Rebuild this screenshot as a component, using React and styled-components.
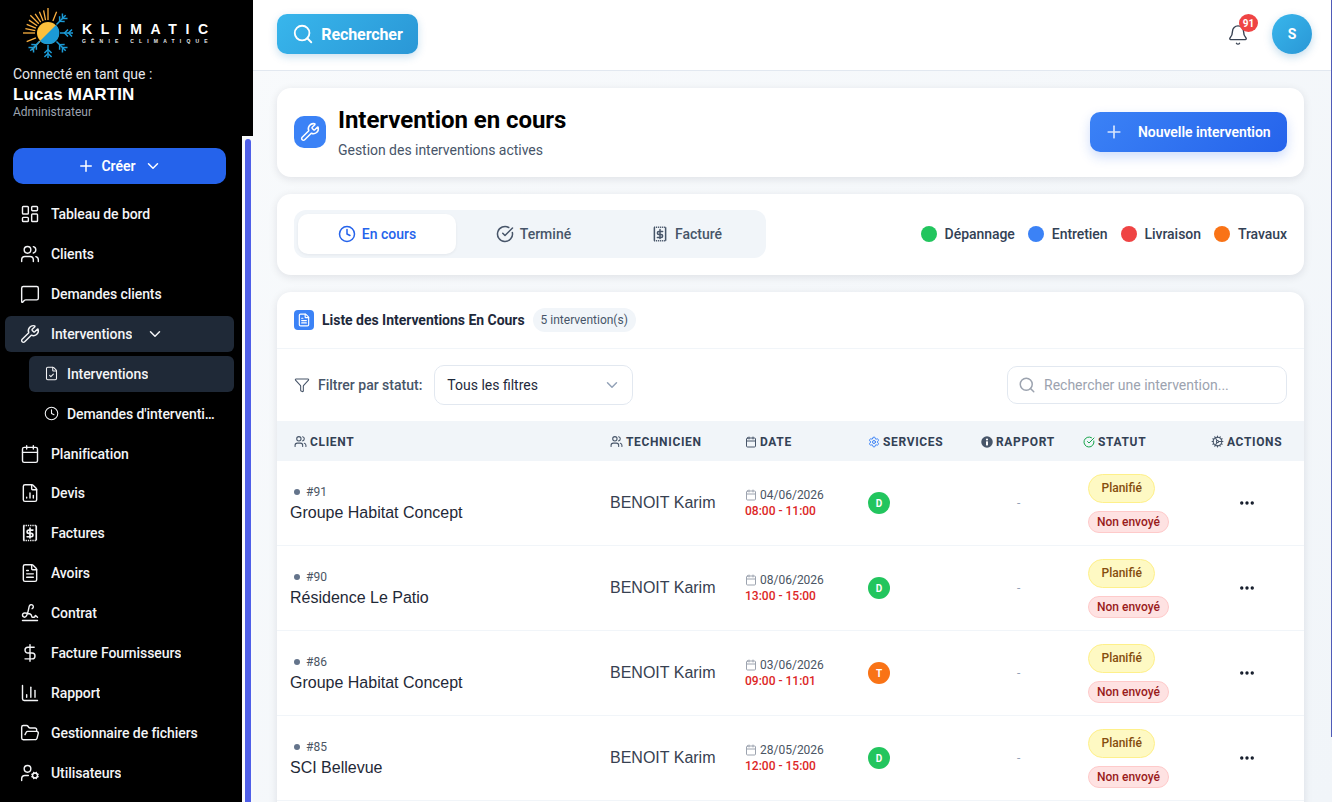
import React from "react";
import styled, { createGlobalStyle } from "styled-components";
import {
  Bell, Calendar, ChartColumn, ChevronDown, CircleCheckBig, Clock, Cog, DollarSign, Ellipsis, FileChartColumn,
  FileCheck, FileText, Filter, FolderOpen, LayoutDashboard, MessageSquare, Plus, Search, Settings, Signature,
  UserCog, Users, Wrench,
} from "lucide-react";

const GlobalStyle = createGlobalStyle`
  * { box-sizing: border-box; }
  html, body { margin: 0; height: 100%; overflow: hidden; }
  body { font-family: Roboto, "Liberation Sans", sans-serif; background: #f8fafc; }
  #root { height: 100%; }
`;

//! Icons the packages don't have
const ReceiptBox = ({ size = 18 }) => (
  <svg width={size} height={size} viewBox="0 0 24 24" fill="none" stroke="currentColor" strokeWidth="2">
    <path d="M4 3H20M4 21H20" strokeDasharray="1.6 1.1" />
    <path d="M4.5 3V21M19.5 3V21" />
    <path d="M12 6v12M15.5 8.5H10.5a2 2 0 0 0 0 4h3a2 2 0 0 1 0 4H8.5" strokeLinecap="round" />
  </svg>
);

const InfoFilled = ({ size = 12 }) => (
  <svg width={size} height={size} viewBox="0 0 24 24">
    <circle cx="12" cy="12" r="11.5" fill="#475569" />
    <rect x="10" y="10.5" width="4" height="8.5" rx="0.8" fill="#fff" />
    <circle cx="12" cy="7" r="2.2" fill="#fff" />
  </svg>
);

const LogoMark = () => {
  const rays = [-135, -158, -112, -180, -90, -202, -68, -146, -124, -169, -101];
  const arms = [0, 45, 90, -45, 135];
  return (
    <svg width="52" height="52" viewBox="0 0 52 52">
      <circle cx="25" cy="25" r="11" fill="#fbbf3c" />
      <path d="M33 17A11 11 0 0 1 17 33Z" fill="#1b9ad6" />
      {rays.map((a) => (
        <line key={a} x1="13" y1="0" x2={a % 45 === 0 ? 25 : 23} y2="0" stroke="#fbb040" strokeWidth="1.3"
          transform={`translate(25 25) rotate(${a})`} />
      ))}
      <line x1="17" y1="33" x2="9" y2="42" stroke="#e9b04a" strokeWidth="1.3" />
      {arms.map((a) => (
        <g key={a} transform={`translate(25 25) rotate(${a})`} stroke="#1b9ad6" strokeWidth="1.5" fill="none">
          <line x1="12" y1="0" x2="25" y2="0" />
          <path d="M20 -3.6L16.5 0L20 3.6M24 -3.6L20.5 0L24 3.6" />
        </g>
      ))}
    </svg>
  );
};

const Shell = styled.div`
  display: flex;
  height: 100vh;
  overflow: hidden;
`;

const Sidebar = styled.aside`
  width: 253px;
  flex: none;
  display: flex;
  flex-direction: column;
  background: #000;
  color: #fff;
`;

const Brand = styled.div`
  height: 60px;
  padding: 8px 0 0 23px;
  display: flex;
  gap: 7px;
`;

const BrandText = styled.div`
  padding-top: 14px;
  width: 130px;
`;

const BrandName = styled.div`
  font-family: "Liberation Sans", sans-serif;
  font-weight: 700;
  font-size: 14px;
  line-height: 14px;
  letter-spacing: 8.6px;
  white-space: nowrap;
`;

const BrandTag = styled.div`
  font-family: "Liberation Sans", sans-serif;
  font-weight: 700;
  font-size: 5px;
  line-height: 8px;
  margin-top: 1px;
  letter-spacing: 5.2px;
  color: #e5e7eb;
  white-space: nowrap;
`;

const UserBlock = styled.div`
  height: 76px;
  padding: 5px 13px 0;
`;

const Connected = styled.div`
  font-size: 14px;
  line-height: 18px;
  color: #e5e7eb;
`;

const UserName = styled.div`
  font-family: "Liberation Sans", sans-serif;
  font-weight: 700;
  font-size: 17px;
  line-height: 22px;
  margin-top: 1px;
  letter-spacing: 0.13px;
`;

const UserRole = styled.div`
  font-size: 12px;
  line-height: 14px;
  margin-top: -1px;
  color: #9ca3af;
`;

const NavArea = styled.div`
  flex: 1;
  min-height: 0;
  display: flex;
`;

const Nav = styled.nav`
  width: 242px;
  padding: 12px 8px 0 5px;
  display: flex;
  flex-direction: column;
  gap: 4px;
  overflow: hidden;
`;

const CreateButton = styled.button`
  height: 36px;
  margin: 0 0 7.94px 8px;
  width: 213px;
  border: 0;
  border-radius: 10px;
  background: #2563eb;
  color: #fff;
  font: 600 14px Roboto, sans-serif;
  display: flex;
  flex: none;
  align-items: center;
  justify-content: center;
  gap: 6px;
`;

const NavRow = styled.div`
  height: 35.94px;
  flex: none;
  display: flex;
  align-items: center;
  gap: ${(p) => (p.$sub ? "8px" : "11px")};
  margin-left: ${(p) => (p.$sub ? "24px" : "0")};
  padding-left: 15px;
  padding-right: 14px;
  border-radius: 6px;
  background: ${(p) => (p.$active ? "#1f2937" : "transparent")};
  color: #f3f4f6;
  font-size: 14px;
  font-weight: 500;
  letter-spacing: -0.08px;
  svg { flex: none; }
`;

const NavLabel = styled.span`
  white-space: nowrap;
  overflow: hidden;
  text-overflow: ellipsis;
`;

const NavChevron = styled(ChevronDown)`
  margin-left: 3px;
`;

const ScrollTrack = styled.div`
  width: 11px;
  padding-left: 3px;
  background: #f8fafc;
`;

const ScrollThumb = styled.div`
  width: 6px;
  height: 100%;
  margin-top: 3px;
  border-radius: 3px 3px 0 0;
  background: #4f5fe8;
`;

const MainWrap = styled.div`
  flex: 1;
  min-width: 0;
  display: flex;
  background: linear-gradient(135deg, #f8fafc 0%, #f1f5f9 100%);
`;

const Main = styled.main`
  flex: 1;
  min-width: 0;
  overflow: hidden;
`;

const PageThumb = styled.div`
  width: 1px;
  height: 737px;
  background: #4f5bb8;
`;

const Topbar = styled.header`
  height: 71px;
  padding: 14px 19px 0 24px;
  display: flex;
  justify-content: space-between;
  background: #fff;
  border-bottom: 1px solid #e2e8f0;
`;

const SearchButton = styled.button`
  width: 141px;
  height: 40px;
  border: 0;
  border-radius: 10px;
  background: linear-gradient(135deg, #38b6ec, #2a97d6);
  box-shadow: 0 3px 8px rgba(14, 116, 180, 0.22);
  color: #fff;
  font: 700 16px Roboto, sans-serif;
  letter-spacing: -0.1px;
  display: flex;
  align-items: center;
  justify-content: center;
  gap: 7px;
`;

const TopRight = styled.div`
  display: flex;
  gap: 23px;
  align-items: flex-start;
`;

const BellWrap = styled.div`
  position: relative;
  width: 22px;
  height: 40px;
  padding-top: 1px;
  display: flex;
  align-items: center;
  color: #374151;
`;

const BellBadge = styled.span`
  position: absolute;
  top: 0;
  left: 12px;
  width: 19px;
  height: 18px;
  border-radius: 50%;
  background: #ef4444;
  color: #fff;
  font-size: 10px;
  font-weight: 700;
  display: flex;
  align-items: center;
  justify-content: center;
`;

const Avatar = styled.div`
  width: 40px;
  height: 40px;
  border-radius: 50%;
  background: linear-gradient(135deg, #38b6ec, #2a97d6);
  box-shadow: 0 3px 8px rgba(14, 116, 180, 0.25);
  color: #fff;
  font-weight: 700;
  font-size: 14px;
  display: flex;
  align-items: center;
  justify-content: center;
`;

const Content = styled.div`
  padding: 17px 27px 0 24px;
  display: flex;
  flex-direction: column;
  gap: 17px;
`;

const Card = styled.section`
  background: #fff;
  border-radius: 14px;
  box-shadow: 0 2px 8px rgba(15, 23, 42, 0.1);
`;

const TitleCard = styled(Card)`
  height: 89px;
  padding: 0 17px 1px;
  display: flex;
  align-items: center;
  gap: 12px;
`;

const IconSquare = styled.div`
  width: ${(p) => p.$size}px;
  height: ${(p) => p.$size}px;
  flex: none;
  border-radius: ${(p) => p.$radius}px;
  background: #3b82f6;
  color: #fff;
  display: flex;
  align-items: center;
  justify-content: center;
`;

const TitleBlock = styled.div`
  flex: 1;
  padding-top: 1px;
`;

const Title = styled.h1`
  margin: 0 0 4px;
  font-size: 24px;
  line-height: 31px;
  font-weight: 700;
  letter-spacing: -0.05px;
  color: #000;
`;

const Subtitle = styled.p`
  margin: 0;
  font-size: 14px;
  line-height: 20px;
  letter-spacing: -0.03px;
  color: #475569;
`;

const NewButton = styled.button`
  width: 197px;
  height: 40px;
  border: 0;
  border-radius: 10px;
  padding-left: 14px;
  background: linear-gradient(135deg, #3b82f6, #2563eb);
  box-shadow: 0 5px 12px rgba(37, 99, 235, 0.22);
  color: #fff;
  font: 600 14px Roboto, sans-serif;
  letter-spacing: -0.05px;
  display: flex;
  align-items: center;
  gap: 14px;
  svg { opacity: 0.8; }
`;

const FilterCard = styled(Card)`
  height: 81px;
  padding: 0 17px 1px;
  display: flex;
  align-items: center;
  justify-content: space-between;
`;

const Tabs = styled.div`
  width: 472px;
  height: 48px;
  padding: 4px;
  display: grid;
  grid-template-columns: 158px 155px 151px;
  border-radius: 12px;
  background: #f1f5f9;
`;

const Tab = styled.div`
  border-radius: 10px;
  display: flex;
  align-items: center;
  justify-content: center;
  gap: 6px;
  font-size: 14px;
  font-weight: 500;
  color: ${(p) => (p.$active ? "#2563eb" : "#475569")};
  background: ${(p) => (p.$active ? "#fff" : "transparent")};
  box-shadow: ${(p) => (p.$active ? "0 1px 3px rgba(15, 23, 42, 0.06)" : "none")};
`;

const Legend = styled.div`
  display: flex;
  gap: 13px;
`;

const LegendItem = styled.div`
  display: flex;
  align-items: center;
  gap: 8px;
  font-size: 14px;
  font-weight: 500;
  letter-spacing: -0.05px;
  color: #334155;
`;

const LegendDot = styled.span`
  width: 16px;
  height: 16px;
  border-radius: 50%;
  background: ${(p) => p.$color};
`;

const ListCard = styled(Card)`
  overflow: hidden;
  min-height: 600px;
`;

const ListHead = styled.div`
  height: 57px;
  padding: 0 17px;
  display: flex;
  align-items: center;
  border-bottom: 1px solid #f1f5f9;
`;

const ListTitle = styled.h2`
  margin: 0 8px 0 8px;
  font-size: 14px;
  font-weight: 700;
  letter-spacing: -0.03px;
  color: #1e293b;
`;

const CountPill = styled.span`
  height: 24px;
  padding: 0 8px;
  border-radius: 12px;
  background: #f1f5f9;
  color: #475569;
  font-size: 12px;
  display: flex;
  align-items: center;
`;

const FilterRow = styled.div`
  height: 72px;
  padding: 0 17px;
  display: flex;
  align-items: center;
  justify-content: space-between;
`;

const FilterLeft = styled.div`
  display: flex;
  align-items: center;
  gap: 8px;
  font-size: 14px;
  font-weight: 500;
  color: #475569;
  svg { color: #475569; }
`;

const Select = styled.div`
  width: 199px;
  height: 40px;
  margin-left: 4px;
  padding: 0 11px 0 12px;
  border: 1px solid #e2e8f0;
  border-radius: 10px;
  background: #fff;
  color: #1e293b;
  font-weight: 400;
  display: flex;
  align-items: center;
  justify-content: space-between;
  svg { color: #94a3b8; }
`;

const SearchField = styled.div`
  width: 280px;
  height: 38px;
  padding: 0 10px;
  border: 1px solid #e2e8f0;
  border-radius: 10px;
  display: flex;
  align-items: center;
  gap: 8px;
  color: #9ca3af;
  font-size: 14px;
`;

const columns = "333px 135px 123px 113px 102px 128px 93px";

const TableHead = styled.div`
  height: 40px;
  padding-top: 1px;
  display: grid;
  grid-template-columns: ${columns};
  align-items: center;
  background: #f1f5f9;
`;

const HeadCell = styled.div`
  padding-left: ${(p) => p.$pad || 0}px;
  display: flex;
  align-items: center;
  gap: 3px;
  font-size: 12px;
  font-weight: 700;
  letter-spacing: 0.65px;
  text-transform: uppercase;
  color: #334155;
  svg { color: ${(p) => p.$iconColor || "#475569"}; }
`;

const Row = styled.div`
  height: 85px;
  display: grid;
  grid-template-columns: ${columns};
  align-items: center;
  border-bottom: 1px solid #f1f5f9;
  background: #fff;
`;

const ClientCell = styled.div`
  padding: 1px 0 0 13px;
`;

const RowNumber = styled.div`
  display: flex;
  align-items: center;
  gap: 6px;
  padding-left: 4px;
  margin-bottom: 1px;
  font-size: 12px;
  line-height: 18px;
  color: #4b5563;
  &::before {
    content: "";
    width: 6px;
    height: 6px;
    border-radius: 50%;
    background: #64748b;
  }
`;

const ClientName = styled.div`
  font-family: "Liberation Sans", sans-serif;
  font-size: 16px;
  line-height: 22px;
  color: #1f2937;
`;

const TechCell = styled.div`
  font-family: "Liberation Sans", sans-serif;
  font-size: 16px;
  color: #374151;
`;

const DateLine = styled.div`
  display: flex;
  align-items: center;
  gap: 3px;
  font-size: 12px;
  line-height: 16px;
  color: #4b5563;
  svg { color: #9ca3af; }
`;

const TimeLine = styled.div`
  font-size: 12px;
  line-height: 16px;
  font-weight: 500;
  color: #dc2626;
`;

const ServiceDot = styled.div`
  width: 22px;
  height: 22px;
  border-radius: 50%;
  background: ${(p) => p.$color};
  color: #fff;
  font-size: 10px;
  font-weight: 700;
  display: flex;
  align-items: center;
  justify-content: center;
`;

const ReportCell = styled.div`
  padding-left: 36px;
  font-size: 12px;
  color: #94a3b8;
`;

const StatusCell = styled.div`
  padding-left: 5px;
  display: flex;
  flex-direction: column;
  align-items: flex-start;
  gap: 8px;
`;

const Badge = styled.span`
  height: ${(p) => (p.$tone === "yellow" ? 29 : 22)}px;
  padding: 0 ${(p) => (p.$tone === "yellow" ? 12.5 : 8)}px;
  border-radius: 15px;
  border: 1px solid ${(p) => (p.$tone === "yellow" ? "#fef08a" : "#fecaca")};
  background: ${(p) => (p.$tone === "yellow" ? "#fef9c3" : "#fee2e2")};
  color: ${(p) => (p.$tone === "yellow" ? "#854d0e" : "#991b1b")};
  font-size: 12px;
  font-weight: 500;
  display: flex;
  align-items: center;
`;

const ActionCell = styled.div`
  padding-left: 27px;
  color: #111827;
  display: flex;
`;

const menu = [
  { label: "Tableau de bord", icon: LayoutDashboard },
  { label: "Clients", icon: Users },
  { label: "Demandes clients", icon: MessageSquare },
  { label: "Interventions", icon: Wrench, active: true, open: true },
  { label: "Interventions", icon: FileCheck, active: true, sub: true },
  { label: "Demandes d'intervention", icon: Clock, sub: true },
  { label: "Planification", icon: Calendar },
  { label: "Devis", icon: FileChartColumn },
  { label: "Factures", icon: ReceiptBox },
  { label: "Avoirs", icon: FileText },
  { label: "Contrat", icon: Signature },
  { label: "Facture Fournisseurs", icon: DollarSign },
  { label: "Rapport", icon: ChartColumn },
  { label: "Gestionnaire de fichiers", icon: FolderOpen },
  { label: "Utilisateurs", icon: UserCog },
];

const legend = [
  { label: "Dépannage", color: "#22c55e" },
  { label: "Entretien", color: "#3b82f6" },
  { label: "Livraison", color: "#ef4444" },
  { label: "Travaux", color: "#f97316" },
];

const rows = [
  { id: 91, client: "Groupe Habitat Concept", date: "04/06/2026", time: "08:00 - 11:00", service: "D", color: "#22c55e" },
  { id: 90, client: "Résidence Le Patio", date: "08/06/2026", time: "13:00 - 15:00", service: "D", color: "#22c55e" },
  { id: 86, client: "Groupe Habitat Concept", date: "03/06/2026", time: "09:00 - 11:01", service: "T", color: "#f97316" },
  { id: 85, client: "SCI Bellevue", date: "28/05/2026", time: "12:00 - 15:00", service: "D", color: "#22c55e" },
];

const App = () => {
  return (
    <Shell>
      <GlobalStyle />
      <Sidebar>
        <Brand>
          <LogoMark />
          <BrandText>
            <BrandName>KLIMATIC</BrandName>
            <BrandTag>GÉNIE CLIMATIQUE</BrandTag>
          </BrandText>
        </Brand>
        <UserBlock>
          <Connected>Connecté en tant que :</Connected>
          <UserName>Lucas MARTIN</UserName>
          <UserRole>Administrateur</UserRole>
        </UserBlock>
        <NavArea>
          <Nav>
            <CreateButton>
              <Plus size={18} />
              <span>Créer</span>
              <ChevronDown size={18} style={{ marginLeft: 2 }} />
            </CreateButton>
            {menu.map(({ label, icon: Icon, active, open, sub }, i) => (
              <NavRow key={i} $active={active} $sub={sub}>
                <Icon size={sub ? 15 : 20} strokeWidth={1.7} />
                <NavLabel>{label}</NavLabel>
                {open && <NavChevron size={18} />}
              </NavRow>
            ))}
          </Nav>
          <ScrollTrack>
            <ScrollThumb />
          </ScrollTrack>
        </NavArea>
      </Sidebar>

      <MainWrap>
        <Main>
          <Topbar>
            <SearchButton>
              <Search size={22} />
              Rechercher
            </SearchButton>
            <TopRight>
              <BellWrap>
                <Bell size={22} strokeWidth={1.5} />
                <BellBadge>91</BellBadge>
              </BellWrap>
              <Avatar>S</Avatar>
            </TopRight>
          </Topbar>

          <Content>
            <TitleCard>
              <IconSquare $size={32} $radius={10}>
                <Wrench size={20} strokeWidth={1.8} />
              </IconSquare>
              <TitleBlock>
                <Title>Intervention en cours</Title>
                <Subtitle>Gestion des interventions actives</Subtitle>
              </TitleBlock>
              <NewButton>
                <Plus size={20} />
                Nouvelle intervention
              </NewButton>
            </TitleCard>

            <FilterCard>
              <Tabs>
                <Tab $active><Clock size={18} />En cours</Tab>
                <Tab><CircleCheckBig size={18} />Terminé</Tab>
                <Tab><ReceiptBox size={18} />Facturé</Tab>
              </Tabs>
              <Legend>
                {legend.map((item) => (
                  <LegendItem key={item.label}>
                    <LegendDot $color={item.color} />
                    {item.label}
                  </LegendItem>
                ))}
              </Legend>
            </FilterCard>

            <ListCard>
              <ListHead>
                <IconSquare $size={20} $radius={4}>
                  <FileText size={14} />
                </IconSquare>
                <ListTitle>Liste des Interventions En Cours</ListTitle>
                <CountPill>5 intervention(s)</CountPill>
              </ListHead>
              <FilterRow>
                <FilterLeft>
                  <Filter size={16} strokeWidth={1.6} />
                  Filtrer par statut:
                  <Select>
                    Tous les filtres
                    <ChevronDown size={18} />
                  </Select>
                </FilterLeft>
                <SearchField>
                  <Search size={18} />
                  Rechercher une intervention...
                </SearchField>
              </FilterRow>
              <TableHead>
                <HeadCell $pad={17}><Users size={13} />Client</HeadCell>
                <HeadCell><Users size={13} />Technicien</HeadCell>
                <HeadCell><Calendar size={12} />Date</HeadCell>
                <HeadCell $iconColor="#3b82f6"><Settings size={12} />Services</HeadCell>
                <HeadCell><InfoFilled />Rapport</HeadCell>
                <HeadCell $iconColor="#16a34a"><CircleCheckBig size={12} />Statut</HeadCell>
                <HeadCell><Cog size={13} />Actions</HeadCell>
              </TableHead>
              {rows.map((row) => (
                <Row key={row.id}>
                  <ClientCell>
                    <RowNumber>#{row.id}</RowNumber>
                    <ClientName>{row.client}</ClientName>
                  </ClientCell>
                  <TechCell>BENOIT Karim</TechCell>
                  <div>
                    <DateLine><Calendar size={12} />{row.date}</DateLine>
                    <TimeLine>{row.time}</TimeLine>
                  </div>
                  <div><ServiceDot $color={row.color}>{row.service}</ServiceDot></div>
                  <ReportCell>-</ReportCell>
                  <StatusCell>
                    <Badge $tone="yellow">Planifié</Badge>
                    <Badge $tone="red">Non envoyé</Badge>
                  </StatusCell>
                  <ActionCell><Ellipsis size={18} strokeWidth={2.5} /></ActionCell>
                </Row>
              ))}
            </ListCard>
          </Content>
        </Main>
        <PageThumb />
      </MainWrap>
    </Shell>
  );
};

export default App;
